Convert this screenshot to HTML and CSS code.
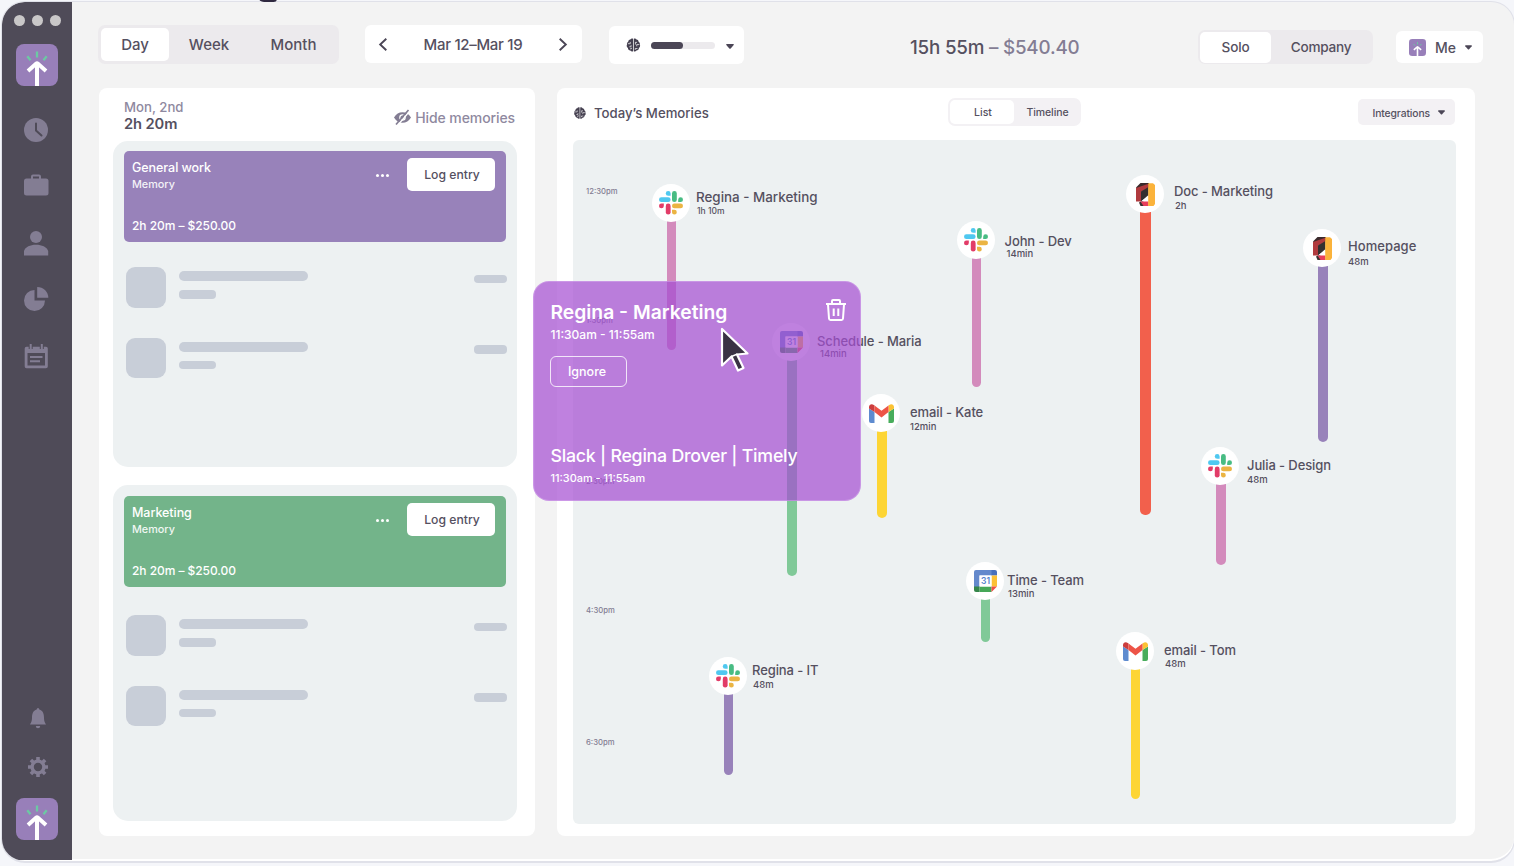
FILE: index.html
```html
<!DOCTYPE html>
<html lang="en">
<head>
<meta charset="utf-8">
<title>Memories</title>
<link rel="stylesheet" href="styles.css">
</head>
<body>
<svg class="defs" aria-hidden="true">
  <symbol id="logo" viewBox="0 0 42 42">
    <rect width="42" height="42" rx="8" fill="#987fb9"/>
    <path d="M21 42V21M12 27l8-7.200q1-.8 2 0l8 7.200" fill="none" stroke="#fff" stroke-width="4"/>
    <path d="M21 7.500v6M11.300 12.300l3.200 4M30.700 12.300l-3.200 4" fill="none" stroke="#6cc9a3" stroke-width="2.300"/>
  </symbol>
  <symbol id="slack" viewBox="0 0 24 24">
    <g fill="#4fc8f0"><path d="M9.200 0a2.400 2.400 0 1 0 0 4.800h2.400V2.400A2.400 2.400 0 0 0 9.200 0z"/><rect x="0" y="6.300" width="11.600" height="4.800" rx="2.400"/></g>
    <g fill="#48bc83"><path d="M24 8.700a2.400 2.400 0 1 0-4.800 0v2.400h2.400A2.400 2.400 0 0 0 24 8.700z"/><rect x="13" y="0" width="4.800" height="11.100" rx="2.400"/></g>
    <g fill="#ebb443"><path d="M15.400 23.600a2.400 2.400 0 1 0 0-4.800H13v2.400a2.400 2.400 0 0 0 2.400 2.400z"/><rect x="13" y="12.500" width="11" height="4.800" rx="2.400"/></g>
    <g fill="#e23c68"><path d="M0 14.900a2.400 2.400 0 1 0 4.800 0v-2.400H2.400A2.400 2.400 0 0 0 0 14.900z"/><rect x="6.800" y="12.500" width="4.800" height="11.100" rx="2.400"/></g>
  </symbol>
  <symbol id="gmail" viewBox="0 0 25 19">
    <path d="M0 4.500L5.500 8v11H2a2 2 0 0 1-2-2z" fill="#5e8bcf"/>
    <path d="M25 4.500L19.500 8v11H23a2 2 0 0 0 2-2z" fill="#48ad5c"/>
    <path d="M0 4V3C0 .4 2.700-.7 4.800.9l.7.500V8L0 4.500z" fill="#cc3d3d"/>
    <path d="M25 4V3c0-2.600-2.700-3.700-4.800-2.100l-.7.500V8L25 4.500z" fill="#fbc233"/>
    <path d="M5.500 1.400l7 5.300 7-5.300V8l-7 5.500-7-5.500z" fill="#ed5447"/>
  </symbol>
  <symbol id="gcal" viewBox="0 0 23 22">
    <path d="M0 2a2 2 0 0 1 2-2h16v5.500H5.500V17H0z" fill="#6489cc"/>
    <path d="M17.500 0H21a2 2 0 0 1 2 2v3.500h-5.500z" fill="#476fbd"/>
    <path d="M17.500 5.500H23v11h-5.500z" fill="#fcc035"/>
    <path d="M5.500 16.500h12V22h-12z" fill="#45a757"/>
    <path d="M0 16.500h5.500V22H2a2 2 0 0 1-2-2z" fill="#35864a"/>
    <path d="M17.500 16.500H23L17.500 22z" fill="#ef4e43"/>
    <path d="M5.500 5.500h12v11h-12z" fill="#fff"/>
    <text x="11.500" y="14.300" text-anchor="middle" class="gcal-num">31</text>
  </symbol>
  <symbol id="doc" viewBox="0 0 19 23">
    <path d="M4.500 0H13v4L0 6V4.500z" fill="#3a2a2c"/>
    <path d="M0 5l12.500-4.200v4.400L5 9v9.500H0z" fill="#b03a3e"/>
    <path d="M5 8.500l7.500-4.500v9L5 18.500z" fill="#332f30"/>
    <path d="M5 18.500l7.500-6.500v7z" fill="#fff"/>
    <path d="M3 19.500l2-1h2l5.500 4.500H4.500z" fill="#3a3232"/>
    <path d="M4.500 18.500h8V23H7.500z" fill="#e83e5b"/>
    <path d="M12.200.3H17L19 2v19l-1.500 2h-5.300z" fill="#fbb33b"/>
  </symbol>
  <symbol id="brain" viewBox="0 0 16 16">
    <path d="M7.500.8C6.400.1 4.900.5 4.400 1.600 2.900 1.700 1.900 2.900 2 4.300.8 5 .2 6.200.6 7.500c-.8 1.400-.3 3.100 1 3.900 0 1.600 1.200 2.900 2.800 2.900.8 1.300 2.200 1.600 3.100.9z" fill="#454050"/>
    <path d="M8.300.8c1.100-.7 2.600-.3 3.100.8 1.500.1 2.500 1.300 2.400 2.700 1.200.7 1.800 1.900 1.400 3.200.8 1.400.3 3.100-1 3.900 0 1.600-1.200 2.900-2.800 2.900-.8 1.300-2.200 1.600-3.100.9z" fill="#454050"/>
    <path d="M1.500 6.500h2.800V4.500M5.200 8.200V10H3.200M4.800 13v-1.200h1.500M14.500 7.500h-2.800V9.500M12 5H10M10.200 5v2.500M12.500 12H10v1.500" fill="none" stroke="#fff" stroke-width=".8"/>
  </symbol>
  <symbol id="caret" viewBox="0 0 8 5"><path d="M.8 0h6.400q1 .2.500 1L4.700 4.500q-.7.700-1.400 0L.3 1Q-.2.200.8 0z" fill="#4b4656"/></symbol>
</svg>

<span class="backdrop-mark"></span>
<div class="window">
  <aside class="sidebar">
    <div class="lights"><i></i><i></i><i></i></div>
    <svg class="brand"><use href="#logo"/></svg>
    <nav class="nav">
      <svg viewBox="0 0 24 24"><circle cx="12" cy="12" r="12" fill="#837d93"/><path d="M12 5.500v7l5.500 5" fill="none" stroke="#4f4b58" stroke-width="2" stroke-linecap="round"/></svg>
      <svg viewBox="0 0 24 24"><path d="M8 5V2.500q0-1 1-1h6q1 0 1 1V5" fill="none" stroke="#837d93" stroke-width="2"/><rect y="4.500" width="24.500" height="17" rx="2.500" fill="#837d93"/></svg>
      <svg viewBox="0 0 24 24"><circle cx="12" cy="6" r="6" fill="#837d93"/><path d="M0 24.500v-4.500C1.500 16 6 13.800 12 13.800S22.500 16 24.200 20v4.500z" fill="#837d93"/></svg>
      <svg viewBox="0 0 24 24"><path d="M10.500 3v10.500H21A10.500 10.500 0 1 1 10.500 3z" fill="#837d93"/><path d="M13.200 0A11 11 0 0 1 24.300 10.800H13.200z" fill="#837d93"/></svg>
      <svg viewBox="0 0 24 24"><path fill-rule="evenodd" d="M2.500 2.800H22q1.800 0 1.800 1.700v18q0 1.800-1.800 1.800H2.500q-1.800 0-1.800-1.800v-18q0-1.700 1.800-1.700zM3.500 9v12.500H21V9z" fill="#837d93"/><path d="M6.700 0v5M17.800 0v5" stroke="#4f4b58" stroke-width="4"/><path d="M6.700 0v5.500M17.800 0v5.500" stroke="#837d93" stroke-width="2"/><path d="M6 12.900h12.500M6 17.200h10" stroke="#837d93" stroke-width="2"/></svg>
    </nav>
    <div class="nav-foot">
      <svg class="bell" viewBox="0 0 16 21"><path d="M8 0q1.300 0 1.300 1.500C13 2.500 14 6 14 9.500c0 4 1 5 2 7H0c1-2 2-3 2-7C2 6 3 2.500 6.700 1.500Q6.700 0 8 0zM5.800 18h4.400a2.200 2.200 0 0 1-4.400 0z" fill="#837d93"/></svg>
      <svg class="gear" viewBox="-10 -10 20 20"><circle r="5.900" fill="none" stroke="#837d93" stroke-width="3.400"/><path d="M0-10v4M0 10V6M-10 0h4M10 0H6M-7.100-7.100l3 3M7.100-7.100l-3 3M-7.100 7.100l3-3M7.100 7.100l-3-3" stroke="#837d93" stroke-width="3.600"/></svg>
    </div>
    <svg class="brand"><use href="#logo"/></svg>
  </aside>

  <main class="main">
    <header class="topbar">
      <div class="segment range"><span class="on">Day</span><span>Week</span><span>Month</span></div>
      <div class="pill dates">
        <svg viewBox="0 0 8 13"><path d="M7.300.8L1.200 6.500l6.100 5.700" /></svg>
        <span>Mar 12–Mar 19</span>
        <svg viewBox="0 0 8 13"><path d="M.7.800l6.100 5.700-6.100 5.700" /></svg>
      </div>
      <div class="pill usage">
        <svg class="usage-brain"><use href="#brain"/></svg>
        <span class="meter"><i></i></span>
        <svg class="caret"><use href="#caret"/></svg>
      </div>
      <div class="total">15h 55m <span>– $540.40</span></div>
      <div class="segment scope"><span class="on">Solo</span><span>Company</span></div>
      <div class="pill me">
        <svg class="avatar" viewBox="0 0 42 42"><use href="#logo"/></svg>
        <span>Me</span>
        <svg class="caret"><use href="#caret"/></svg>
      </div>
    </header>

    <div class="columns">
      <section class="panel day">
        <div class="day-head">
          <div><div class="date">Mon, 2nd</div><div class="sum">2h 20m</div></div>
          <div class="hide">
            <svg viewBox="0 0 17 15"><path fill-rule="evenodd" d="M0 7.500C2 4 5 2.200 8.500 2.200S15 4 17 7.500c-2 3.500-5 5.300-8.500 5.300S2 11 0 7.500zm5.200 0a3.300 3.300 0 1 0 6.600 0 3.300 3.300 0 0 0-6.600 0z" fill="#837d93"/><circle cx="8.500" cy="7.500" r="2" fill="#837d93"/><path d="M4.300 14.500L16 .8" stroke="#fff" stroke-width="1.400"/><path d="M2 14.500L14.500 0" stroke="#837d93" stroke-width="1.700"/></svg>
            <span>Hide memories</span>
          </div>
        </div>
        <article class="group first">
          <div class="entry purple">
            <div class="entry-text"><b>General work</b><span>Memory</span><em>2h 20m – $250.00</em></div>
            <div class="more"><i></i><i></i><i></i></div>
            <button class="log">Log entry</button>
          </div>
          <div class="ghost"><i class="sq"></i><div><i class="l1"></i><i class="l2"></i></div><i class="l3"></i></div>
          <div class="ghost"><i class="sq"></i><div><i class="l1"></i><i class="l2"></i></div><i class="l3"></i></div>
        </article>
        <article class="group second">
          <div class="entry green">
            <div class="entry-text"><b>Marketing</b><span>Memory</span><em>2h 20m – $250.00</em></div>
            <div class="more"><i></i><i></i><i></i></div>
            <button class="log">Log entry</button>
          </div>
          <div class="ghost"><i class="sq"></i><div><i class="l1"></i><i class="l2"></i></div><i class="l3"></i></div>
          <div class="ghost"><i class="sq"></i><div><i class="l1"></i><i class="l2"></i></div><i class="l3"></i></div>
        </article>
      </section>

      <section class="panel memories">
        <div class="mem-head">
          <svg class="mem-brain"><use href="#brain"/></svg>
          <h2>Today’s Memories</h2>
          <div class="segment view"><span class="on">List</span><span>Timeline</span></div>
          <div class="integrations"><span>Integrations</span><svg class="caret"><use href="#caret"/></svg></div>
        </div>
        <div class="canvas">
          <time class="t1">12:30pm</time>
          <time class="t2">1:30pm</time>
          <time class="t3">2:30pm</time>
          <time class="t4">4:30pm</time>
          <time class="t5">6:30pm</time>

          <div class="node n-regina pink"><i class="bar"></i><span class="pin"><svg class="ic-slack"><use href="#slack"/></svg></span><b>Regina - Marketing</b><small>1h 10m</small></div>
          <div class="node n-john pink"><i class="bar"></i><span class="pin"><svg class="ic-slack"><use href="#slack"/></svg></span><b>John - Dev</b><small>14min</small></div>
          <div class="node n-doc red"><i class="bar"></i><span class="pin"><svg class="ic-doc"><use href="#doc"/></svg></span><b>Doc - Marketing</b><small>2h</small></div>
          <div class="node n-home violet"><i class="bar"></i><span class="pin"><svg class="ic-doc"><use href="#doc"/></svg></span><b>Homepage</b><small>48m</small></div>
          <div class="node n-maria mint"><i class="bar"></i><span class="pin"><svg class="ic-cal"><use href="#gcal"/></svg></span><b>Schedule - Maria</b><small>14min</small></div>
          <div class="node n-julia pink"><i class="bar"></i><span class="pin"><svg class="ic-slack"><use href="#slack"/></svg></span><b>Julia - Design</b><small>48m</small></div>
          <div class="node n-team mint"><i class="bar"></i><span class="pin"><svg class="ic-cal"><use href="#gcal"/></svg></span><b>Time - Team</b><small>13min</small></div>
          <div class="node n-tom yellow"><i class="bar"></i><span class="pin"><svg class="ic-mail"><use href="#gmail"/></svg></span><b>email - Tom</b><small>48m</small></div>
          <div class="node n-it violet"><i class="bar"></i><span class="pin"><svg class="ic-slack"><use href="#slack"/></svg></span><b>Regina - IT</b><small>48m</small></div>

          <div class="popup">
            <div class="popup-top">
              <h3>Regina - Marketing</h3>
              <svg class="trash" viewBox="0 0 20 22"><path d="M0 5h20M6 4.500V2q0-1 1-1h6q1 0 1 1v2.500M2 5.500l1 14q.1 1.500 1.500 1.500h11q1.400 0 1.500-1.500l1-14M7.700 9.500v7.500M12.300 9.500v7.500" fill="none" stroke="#fff" stroke-width="2"/></svg>
            </div>
            <p class="when">11:30am - 11:55am</p>
            <button class="ignore">Ignore</button>
            <h4>Slack | Regina Drover | Timely</h4>
            <p class="when small">11:30am - 11:55am</p>
          </div>
          <div class="node n-kate yellow"><i class="bar"></i><span class="pin"><svg class="ic-mail"><use href="#gmail"/></svg></span><b>email - Kate</b><small>12min</small></div>
          <svg class="cursor" viewBox="0 0 30 46"><path d="M2 2v36.500l9.500-9L18 43.500l5.500-2.500-6.500-13.500L27.500 26.500z" fill="#3a3344" stroke="#fff" stroke-width="2.200" stroke-linejoin="round"/><path d="M11.500 29.500l6-2.500" stroke="#fff" stroke-width="1.500"/></svg>
        </div>
      </section>
    </div>
  </main>
</div>
</body>
</html>
```

FILE: styles.css
```css
* { box-sizing: border-box; }
body {
  margin: 0; width: 1514px; height: 866px; overflow: hidden; position: relative;
  background: #f5f6fa; padding: 1px 0 0 1px;
  font-family: Inter, "Liberation Sans", sans-serif; color: #55505f; font-weight: 450;
}
.defs { position: absolute; width: 0; height: 0; }
svg { display: block; overflow: visible; flex: none; }
.backdrop-mark { position: absolute; left: 258px; top: -4px; width: 19px; height: 6px; background: #2f2940; border-radius: 0 0 5px 9px; z-index: 3; }

.window {
  width: 1514px; height: 862px; display: flex; background: #f3f3f3;
  border: 1px solid #e0e1e9; border-bottom-width: 2px; border-radius: 24px; overflow: hidden;
  box-shadow: inset 0 -2px 0 #fff;
}
.sidebar {
  width: 70px; flex: none; height: 858px; background: #4f4b58; border-radius: 22px 0 0 16px;
  display: flex; flex-direction: column; align-items: center; padding-top: 13px; padding-right: 3px;
}
.lights { display: flex; gap: 7px; padding-left: 4px; }
.lights i { width: 11px; height: 11px; border-radius: 50%; background: #c9c7c8; }
.brand { width: 42px; height: 42px; flex: none; margin-top: 18px; margin-left: 3px; }
.nav { display: flex; flex-direction: column; gap: 32.600px; margin-top: 31.500px; margin-left: 1px; }
.nav svg { width: 24px; height: 24px; }
.nav-foot { display: flex; flex-direction: column; align-items: center; gap: 28px; margin-top: 340px; padding-left: 4px; }
.bell { width: 16px; height: 21px; }
.gear { width: 20px; height: 20px; }
.nav-foot + .brand { margin-top: 21px; }

.main { padding: 23px 0 0 27px; flex: none; width: 1441px; }
.topbar { display: flex; height: 40px; align-items: flex-start; font-size: 15px; }
.topbar > * { flex: none; }
.segment { display: flex; background: #eceaed; border-radius: 7px; }
.segment span { display: flex; align-items: center; justify-content: center; border-radius: 5px; flex: none; }
.segment .on { background: #fff; }
.range { width: 241px; height: 39px; padding: 3px; margin-left: -1px; }
.range span { width: 68px; }
.range span:nth-child(2) { width: 80px; }
.range span:nth-child(3) { width: 89px; }
.pill { background: #fff; border-radius: 6px; display: flex; align-items: center; }
.dates { width: 217px; height: 38px; margin-left: 26px; padding: 0 15px 0 14px; justify-content: space-between; letter-spacing: -.3px; }
.dates span { margin-top: 1px; }
.dates svg { width: 8px; height: 13px; fill: none; stroke: #4b4656; stroke-width: 1.900; }
.usage { width: 135px; height: 38px; margin: 1px 0 0 27px; padding-left: 17px; }
.usage-brain { width: 15px; height: 14px; margin-right: 10px; }
.usage-brain use { transform: scale(1); }
.meter { width: 64px; height: 7px; border-radius: 4px; background: #eceaed; }
.meter i { display: block; width: 32px; height: 7px; border-radius: 4px; background: #4b4656; }
.usage .caret { width: 8px; height: 5px; margin-left: 11px; margin-top: 2px; }
.total { width: 180px; margin: 11px 0 0 166px; font-size: 18.800px; line-height: 24px; font-weight: 540; letter-spacing: -.2px; white-space: nowrap; }
.total span { color: #837d93; }
.scope { width: 175px; height: 34px; padding: 1.500px 2px; margin: 5px 0 0 108px; font-size: 13.600px; }
.scope .on { width: 71px; letter-spacing: -.2px; }
.scope span:last-child { width: 100px; letter-spacing: -.25px; }
.me { width: 87px; height: 32px; margin: 6px 0 0 23px; padding-left: 13px; font-size: 14px; }
.avatar { width: 17px; height: 17px; margin-right: 9px; }
.me .caret { width: 7px; height: 5px; margin-left: 9px; }

.columns { display: flex; gap: 22px; margin-top: 23px; }
.panel { height: 748px; background: #fff; border-radius: 8px; flex: none; }
.day { width: 436px; padding: 11px 18px 0 14px; }
.day-head { display: flex; justify-content: space-between; padding: 0 2px 0 11px; height: 42px; }
.date { font-size: 13.200px; line-height: 17px; color: #8f89a0; }
.sum { font-size: 14.700px; line-height: 17px; font-weight: 560; letter-spacing: -.1px; }
.hide { display: flex; gap: 4px; color: #8f89a0; font-size: 14px; height: 17px; align-items: center; margin-top: 9.500px; letter-spacing: -.1px; }
.hide svg { width: 17px; height: 15px; }
.group { width: 404px; background: #edf1f2; border-radius: 15px; padding: 10px 10px 0 11px; }
.first { height: 326px; }
.second { height: 336px; margin-top: 18px; padding-top: 11px; }
.entry { height: 91px; width: 382px; border-radius: 5px; color: #fff; display: flex; padding: 7px 11px 0 8px; margin-bottom: 25px; align-items: flex-start; }
.second .entry { margin-bottom: 28px; }
.purple { background: #9882ba; }
.green { background: #73b48a; }
.entry-text { width: 244px; display: flex; flex-direction: column; }
.entry-text b { font-size: 12.500px; line-height: 19px; font-weight: 550; letter-spacing: -.05px; }
.entry-text span { font-size: 10.800px; line-height: 15px; opacity: .9; }
.entry-text em { font-style: normal; font-size: 12px; line-height: 16px; margin-top: 26px; font-weight: 480; letter-spacing: -.05px; }
.more { display: flex; gap: 2px; margin: 15.500px 18px 0 0; }
.more i { width: 3px; height: 3px; border-radius: 50%; background: #fff; }
.log { width: 88px; height: 33px; border: 0; border-radius: 5px; background: #fff; color: #55505f; font: 450 12.200px Inter, sans-serif; padding: 0 0 0 2px; margin-left: auto; }
.ghost { display: flex; height: 40.500px; margin-bottom: 30.200px; padding-left: 1.500px; width: 383px; }
.ghost i { display: block; background: #c8ced8; }
.sq { width: 40px; height: 40.500px; border-radius: 9px; margin-right: 13.500px; }
.l1 { width: 129px; height: 10px; border-radius: 5px; margin-top: 4px; }
.l2 { width: 37px; height: 8.500px; border-radius: 4px; margin-top: 9px; }
.l3 { width: 33px; height: 8.500px; border-radius: 4px; margin: 7.500px 0 0 auto; }

.memories { width: 918px; padding: 10px 19px 0 16px; }
.mem-head { display: flex; height: 42px; padding-left: 1px; }
.mem-head > * { flex: none; }
.mem-brain { width: 12px; height: 12px; margin: 9px 8px 0 0; }
h2 { margin: 0; width: 354px; font-size: 13.200px; line-height: 30px; font-weight: 550; }
.view { background: #f3f1f4; width: 133px; height: 28px; padding: 2px; font-size: 10.500px; font-weight: 480; }
.view .on { width: 64px; padding-left: 2px; }
.view span:last-child { width: 67px; letter-spacing: -.1px; }
.integrations { width: 97px; height: 26px; margin: 1px 0 0 277px; border-radius: 5px; background: #f3f1f4; font-size: 10.300px; font-weight: 480; display: flex; align-items: center; padding: 1px 0 0 14.500px; letter-spacing: -.1px; }
.integrations .caret { width: 7px; height: 5px; margin-left: 8.500px; }

/* Free canvas: every node sits at the centre of its pin */
.canvas { position: relative; width: 883px; height: 684px; border-radius: 6px; background: #edf1f2; }
time { position: absolute; left: 13px; font-size: 7.700px; line-height: 10px; color: #837d93; }
.t1 { top: 47px; } .t2 { top: 176px; } .t3 { top: 337px; } .t4 { top: 466px; } .t5 { top: 597.500px; }
.node { position: absolute; width: 0; height: 0; --w: 10px; --tx: 27px; --ty: -9px; --sx: 27px; --sy: 7px; }
.pin { position: absolute; left: -19px; top: -19px; width: 38px; height: 38px; border-radius: 50%; background: #fff; display: grid; place-items: center; }
.bar { position: absolute; left: calc(var(--w) / -2 + .5px); top: 0; width: var(--w); height: var(--len); border-radius: 5px; background: var(--c); }
.node b { position: absolute; left: var(--tx); top: var(--ty); font-size: 13px; line-height: 18px; font-weight: 450; white-space: nowrap; letter-spacing: -.1px; }
.node small { position: absolute; left: var(--sx); top: var(--sy); font-size: 9.500px; line-height: 12px; font-weight: 480; white-space: nowrap; }
.pink { --c: #d38bbc; } .red { --c: #f2604c; } .violet { --c: #9882ba; } .mint { --c: #80c998; } .yellow { --c: #fdd535; }
.ic-slack { width: 24px; height: 24px; }
.ic-mail { width: 25px; height: 19px; }
.ic-cal { width: 23px; height: 22px; }
.ic-doc { width: 19px; height: 23px; }
.gcal-num { font: 600 8.500px Inter, sans-serif; fill: #5482cd; }
.n-regina { left: 98px; top: 63px; --len: 147px; --w: 9px; --tx: 25px; --ty: -15px; --sx: 26px; --sy: 2px; }
.n-regina b { font-size: 13.400px; letter-spacing: 0; }
.n-regina small { font-size: 8.500px; }
.n-john { left: 402.500px; top: 100px; --len: 147px; --w: 9px; --tx: 29px; --ty: -8px; --sx: 31px; --sy: 8px; }
.n-doc { left: 572px; top: 54px; --len: 321px; --w: 11px; --tx: 29px; --ty: -12px; --sx: 30px; --sy: 6px; }
.n-home { left: 749px; top: 108px; --len: 194px; --tx: 26px; --ty: -11px; --sx: 26px; --sy: 8px; }
.n-home b { letter-spacing: .05px; }
.n-maria { left: 218px; top: 202px; --len: 234px; --tx: 26px; --ty: -10px; --sx: 29px; --sy: 6px; }
.n-kate { left: 308px; top: 273px; --len: 105px; --tx: 29px; --ty: -10px; --sx: 29px; --sy: 7.500px; }
.n-julia { left: 647px; top: 326px; --len: 99px; --tx: 27px; --ty: -10px; --sx: 27px; --sy: 8px; }
.n-team { left: 412px; top: 440.500px; --len: 61px; --w: 9px; --tx: 22px; --ty: -9.500px; --sx: 23px; --sy: 7.500px; }
.n-tom { left: 562px; top: 511px; --len: 148px; --w: 9.500px; --tx: 29px; --ty: -10px; --sx: 30px; --sy: 6.500px; }
.n-it { left: 155px; top: 535.500px; --len: 99px; --w: 9px; --tx: 24px; --ty: -14.500px; --sx: 25px; --sy: 3px; }

.popup {
  position: absolute; left: -40px; top: 141px; width: 328px; height: 220px; border-radius: 16px;
  background: rgba(165, 78, 210, .71); border: 1.500px solid rgba(220, 180, 240, .45);
  color: #fff; padding: 16px 14px 0 16.500px;
}
.popup-top { display: flex; justify-content: space-between; }
h3 { margin: 1px 0 0; font-size: 19.300px; line-height: 27px; font-weight: 600; white-space: nowrap; }
.trash { width: 20px; height: 22px; margin-top: 1px; }
.when { margin: 1px 0 0; font-size: 12px; line-height: 16px; font-weight: 520; }
.ignore { display: block; width: 77px; height: 31px; margin: 13px 0 0 -.5px; background: none; border: 1.500px solid rgba(255,255,255,.8); border-radius: 6px; color: #fff; font: 520 12.500px Inter, sans-serif; padding: 0 3px 0 0; }
h4 { margin: 55px 0 0; font-size: 17.800px; line-height: 27px; font-weight: 540; white-space: nowrap; letter-spacing: -.25px; }
.when.small { font-size: 10.900px; }
.cursor { position: absolute; left: 147px; top: 186px; width: 30px; height: 48px; }
```
